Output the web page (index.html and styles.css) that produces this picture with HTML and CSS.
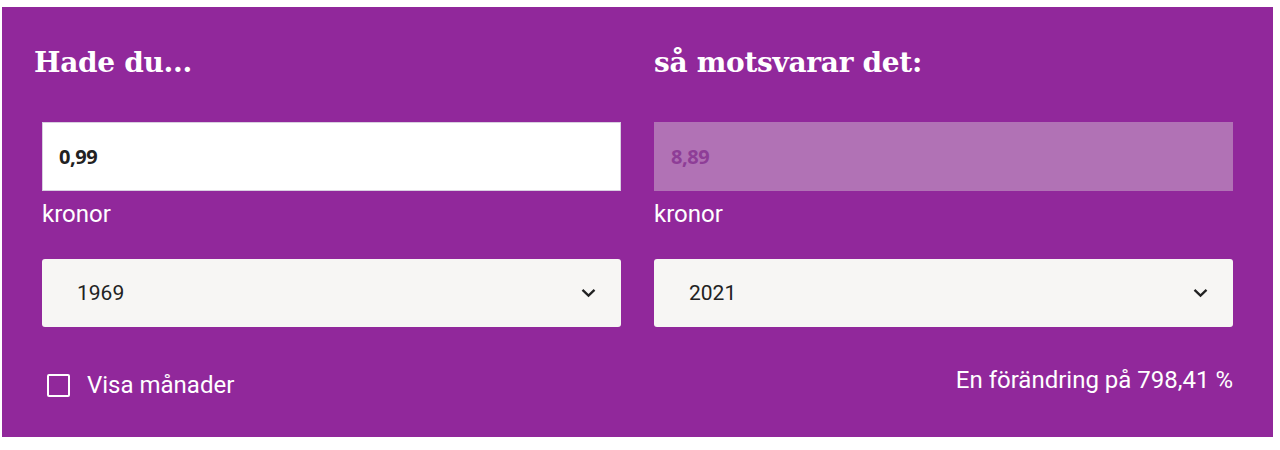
FILE: index.html
```html
<!DOCTYPE html>
<html lang="sv">
<head>
<meta charset="utf-8">
<link rel="stylesheet" href="styles.css">
</head>
<body>
<div class="calc">
  <div class="cols">
    <div class="col">
      <h2 class="title title-left">Hade du...</h2>
      <div class="input">0,99</div>
      <div class="unit">kronor</div>
      <div class="select"><span>1969</span>
        <svg class="chev" width="15" height="10" viewBox="0 0 15 10"><path d="M1.5 1.8 L7.5 7.6 L13.5 1.8" fill="none" stroke="#222" stroke-width="2.3"/></svg>
      </div>
    </div>
    <div class="col">
      <h2 class="title">så motsvarar det:</h2>
      <div class="input output">8,89</div>
      <div class="unit">kronor</div>
      <div class="select"><span>2021</span>
        <svg class="chev" width="15" height="10" viewBox="0 0 15 10"><path d="M1.5 1.8 L7.5 7.6 L13.5 1.8" fill="none" stroke="#222" stroke-width="2.3"/></svg>
      </div>
    </div>
  </div>
  <div class="bottom">
    <label class="check"><span class="box"></span><span>Visa månader</span></label>
    <div class="result">En förändring på 798,41 %</div>
  </div>
</div>
</body>
</html>
```
FILE: styles.css
```css
html, body { margin: 0; padding: 0; background: #fff; }
.calc {
  margin: 7px 7px 0 2px;
  background: #91289b;
  padding: 36px 40px 0 40px;
  height: 430px;
  box-sizing: border-box;
  color: #fff;
  font-family: Roboto, "Liberation Sans", sans-serif;
}
.cols { display: grid; grid-template-columns: 1fr 1fr; column-gap: 33px; }
.col { display: flex; flex-direction: column; }
.title {
  margin: 0;
  font-family: "DejaVu Serif", "Liberation Serif", serif;
  font-weight: bold;
  font-size: 28px;
  line-height: 40px;
  color: #fff;
  letter-spacing: -0.3px;
}
.title-left { margin-left: -8px; }
.input {
  margin-top: 39px;
  height: 69px;
  box-sizing: border-box;
  background: #fff;
  border: 1px solid #d8cfe0;
  display: flex; align-items: center;
  padding-left: 16px;
  font-family: "Open Sans", sans-serif;
  font-weight: bold;
  font-size: 20px;
  letter-spacing: -0.4px;
  color: #222;
}
.input.output {
  background: #b172b5;
  border-color: #b172b5;
  color: #8e3d97;
}
.unit { margin-top: 9px; line-height: 28px; font-size: 24px; }
.select {
  margin-top: 31px;
  height: 68px;
  box-sizing: border-box;
  background: #f7f6f4;
  border-radius: 3px;
  display: flex; align-items: center; justify-content: space-between;
  padding: 0 25px 0 35px;
  font-size: 21px;
  color: #222;
}
.chev { display: block; }
.bottom {
  margin-top: 39px;
  display: flex; justify-content: space-between; align-items: flex-start;
}
.check { display: flex; align-items: center; gap: 17px; font-size: 24px; margin-left: 5px; margin-top: 5px; }
.box {
  width: 23px; height: 23px; box-sizing: border-box;
  border: 2px solid #fff; border-radius: 2px;
}
.result { font-size: 24px; line-height: 28px; }
```
